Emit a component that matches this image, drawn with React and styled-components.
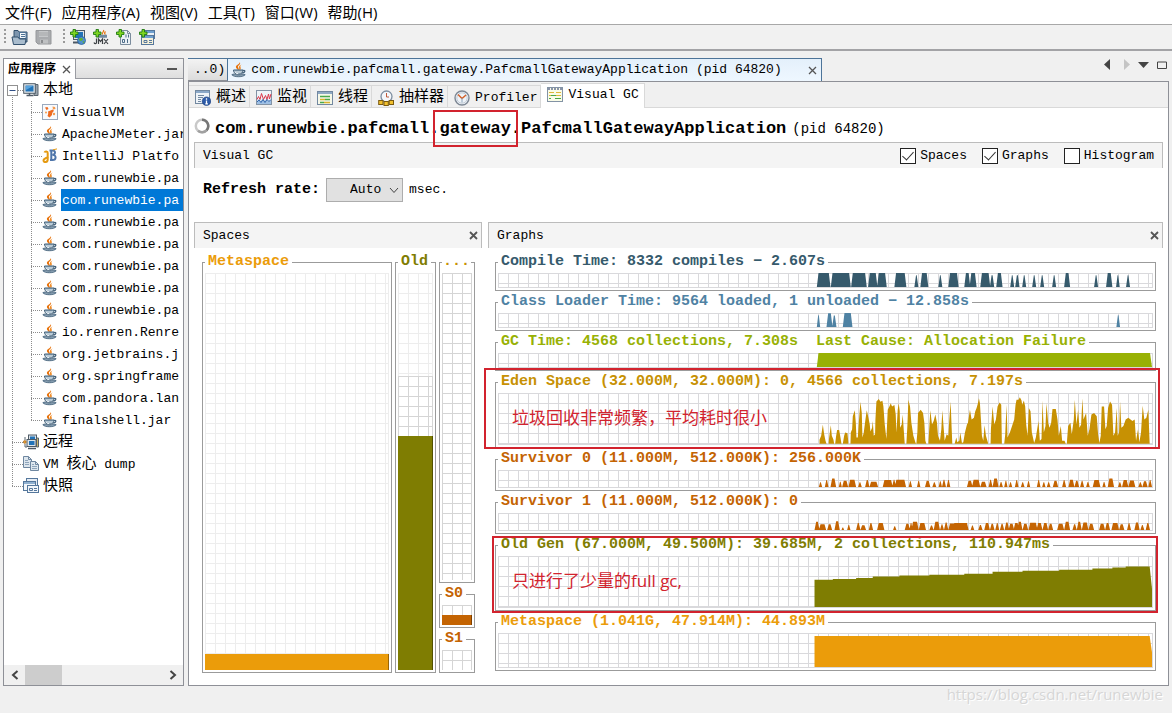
import React from "react";
import styled, { createGlobalStyle, css } from "styled-components";

const mono = `"Liberation Mono", "Noto Sans CJK SC", monospace`;
const sans = `"Open Sans", "Noto Sans CJK SC", sans-serif`;
const red = "#d2232e";

const Global = createGlobalStyle`
  * { box-sizing: border-box; }
  html, body { margin: 0; padding: 0; }
  body { background: #f0f0f0; color: #000; font: 13px/16px ${mono}; }
  button, input, select { font: inherit; color: inherit; margin: 0; }
  svg { display: block; flex: none; }
`;

/* ---------- window chrome ---------- */

const Window = styled.div`
  display: flex;
  flex-direction: column;
  min-height: 100vh;
`;

const MenuBar = styled.nav`
  display: flex;
  gap: 10px;
  height: 25px;
  padding: 0 5px;
  background: #fff;
  border-bottom: 1px solid #a8a8a8;
`;

const MenuItem = styled.button`
  padding: 0;
  border: 0;
  background: none;
  font: 15px/24px ${sans};
  white-space: nowrap;
`;

const Toolbar = styled.div`
  display: flex;
  align-items: center;
  gap: 7px;
  height: 26px;
  padding: 0 4px;
  background: #f1f1f1;
  border-bottom: 2px solid #a3a3a6;
`;

const Grip = styled.span`
  width: 2px;
  height: 16px;
  margin-left: ${(p) => (p.$spaced ? "4px" : "0")};
  margin-right: -2px;
  background: repeating-linear-gradient(#9a9a9a 0 2px, transparent 2px 4px);
`;

const IconButton = styled.button`
  display: flex;
  align-items: center;
  justify-content: center;
  padding: 0;
  border: 0;
  background: none;
`;

const Workspace = styled.div`
  display: flex;
  flex: 1;
  gap: 4px;
  padding: 7px 3px 0;
`;

const Footer = styled.footer`
  height: 27px;
  padding: 0 9px;
  text-align: right;
  font: 15px/16px ${sans};
  color: #d6d6d6;
  text-shadow: 1px 1px 0 #fff;
`;

/* ---------- application tree ---------- */

const Sidebar = styled.aside`
  display: flex;
  flex-direction: column;
  flex: none;
  width: 181px;
  background: #fff;
  border: 1px solid #8e9097;
`;

const SidebarHeader = styled.div`
  display: flex;
  justify-content: space-between;
  height: 20px;
  border-bottom: 1px solid #9a9ca2;
  background: linear-gradient(#f2f2f2, #dedede);
`;

const SidebarTab = styled.div`
  display: flex;
  align-items: center;
  gap: 6px;
  height: 20px;
  padding: 0 4px;
  background: #fff;
  border-right: 1px solid #9a9ca2;
  font: bold 12px/18px ${sans};
`;

const MinimizeButton = styled(IconButton)`
  width: 22px;
`;

const Tree = styled.ul`
  flex: 1;
  margin: 0;
  padding: 0;
  list-style: none;
  overflow: hidden;
`;

const TreeRow = styled.li`
  display: flex;
  align-items: center;
  height: 22px;
  white-space: nowrap;
`;

const dots = (dir) => `repeating-linear-gradient(${dir}, #8c8c8c 0 1px, transparent 1px 2px)`;

const Guide = styled.span`
  flex: none;
  display: flex;
  align-items: center;
  width: 19px;
  height: 22px;
  padding-left: 3px;
  background-repeat: no-repeat;
  background-image: ${dots("180deg")}, ${dots("90deg")};
  background-position: 8px ${(p) => (p.$line === "start" ? "16px" : "0")}, 8px 11px;
  background-size: 1px ${(p) => ({ full: "100%", end: "11px", start: "6px", none: "0" })[p.$line]},
    ${(p) => (p.$stub ? "11px" : "0")} 1px;
`;

const TreeLabel = styled.span`
  flex: 1;
  height: 22px;
  margin-left: 3px;
  padding-left: 1px;
  line-height: 24px;
  overflow: hidden;
  ${(p) =>
    p.$selected &&
    css`
      background: #0078d7;
      color: #fff;
    `}
`;

const Cjk = styled.span`
  font-size: 15px;
`;

const ScrollBar = styled.div`
  display: flex;
  align-items: stretch;
  height: 20px;
  background: #f0f0f0;
`;

const ScrollButton = styled(IconButton)`
  width: 21px;
`;

const ScrollThumb = styled.div`
  width: 37px;
  background: #cdcdcd;
`;

const ScrollTrack = styled.div`
  flex: 1;
`;

/* ---------- document area ---------- */

const Documents = styled.main`
  display: flex;
  flex-direction: column;
  flex: 1;
  min-width: 0;
`;

const TabStrip = styled.div`
  display: flex;
  height: 23px;
`;

const DocTab = styled.div`
  display: flex;
  align-items: center;
  gap: 4px;
  padding: 0 4px 0 3px;
  border: 0 solid #4d7499;
  border-width: 1px 1px 0 0;
  white-space: nowrap;
  ${(p) =>
    p.$active
      ? css`
          background: linear-gradient(#e4f0fb, #eef7ff);
        `
      : css`
          padding-left: 6px;
          padding-right: 2px;
          background: linear-gradient(#f3f3f3, #dcdcdc);
          border-bottom: 1px solid #8e9097;
        `}
`;

const DocTitle = styled.span`
  line-height: 24px;
  margin-right: 22px;
`;

const StripTools = styled.div`
  display: flex;
  flex: 1;
  align-items: center;
  justify-content: flex-end;
  gap: 8px;
  padding: 0 2px 10px 0;
`;

const Document = styled.section`
  display: flex;
  flex-direction: column;
  flex: 1;
  background: #fff;
  border: 1px solid #8e9097;
`;

const ViewTabs = styled.div`
  display: flex;
  align-items: flex-end;
  height: 26px;
  background: #f0f0f0;
  border-bottom: 1px solid #d9d9d9;
`;

const ViewTab = styled.button`
  display: flex;
  align-items: center;
  gap: 5px;
  height: ${(p) => (p.$active ? "25px" : "22px")};
  margin-bottom: ${(p) => (p.$active ? "-1px" : "0")};
  padding: ${(p) => (p.$active ? "0 5px 2px 6px" : "2px 3px 0 6px")};
  border: 0 solid #d9d9d9;
  border-right-width: 1px;
  border-top-width: 1px;
  background: ${(p) => (p.$active ? "#fff" : "#f0f0f0")};
  white-space: nowrap;
`;

const Heading = styled.header`
  display: flex;
  align-items: center;
  height: 34px;
  padding: 2px 8px 0 5px;
  white-space: nowrap;
`;

const Title = styled.h1`
  margin: 6px 6px 0 5px;
  font: bold 17px/20px ${mono};
`;

const Pid = styled.span`
  margin-top: 6px;
  font-size: 14px;
`;

const Circled = styled.span`
  position: relative;
`;

const Marker = styled.span`
  position: absolute;
  inset: ${(p) => p.$inset};
  border: 2px solid ${red};
  pointer-events: none;
`;

const Note = styled.p`
  position: absolute;
  left: 16px;
  top: 16px;
  margin: 0;
  font: 17px/24px ${sans};
  color: ${red};
  white-space: nowrap;
`;

const Content = styled.div`
  display: flex;
  flex-direction: column;
  flex: 1;
  padding: 0 5px;
`;

const PanelBar = styled.div`
  display: flex;
  align-items: center;
  justify-content: space-between;
  height: 26px;
  padding: 0 8px;
  background: #f4f4f4;
  border: 1px solid #bcbcbc;
  border-bottom: 0;
`;

const PanelClose = styled(IconButton)`
  margin-right: -5px;
`;

const Options = styled.div`
  display: flex;
  gap: 15px;
`;

const Option = styled.label`
  display: flex;
  align-items: center;
  gap: 4px;
`;

const CheckBox = styled.input`
  appearance: none;
  display: flex;
  justify-content: center;
  width: 16px;
  height: 16px;
  background: #fff;
  border: 1px solid #222;
  &:checked::after {
    content: "";
    width: 5px;
    height: 10px;
    border: solid #333;
    border-width: 0 1px 1px 0;
    transform: rotate(42deg);
  }
`;

const RefreshRow = styled.div`
  display: flex;
  align-items: center;
  gap: 6px;
  padding: 10px 9px 20px;
`;

const RefreshLabel = styled.label`
  font-size: 15px;
  font-weight: bold;
`;

const SelectBox = styled.span`
  position: relative;
  svg {
    position: absolute;
    right: 4px;
    top: 9px;
    pointer-events: none;
  }
`;

const Select = styled.select`
  appearance: none;
  display: block;
  width: 77px;
  height: 24px;
  padding: 0 18px 0 23px;
  border: 1px solid #adadad;
  border-radius: 0;
  background: #e1e1e1;
`;

const Panels = styled.div`
  display: flex;
  flex: 1;
  gap: 6px;
`;

const Panel = styled.section`
  display: flex;
  flex-direction: column;
  flex: ${(p) => (p.$wide ? "1" : "0 0 288px")};
  min-width: 0;
`;

const SpacesBody = styled.div`
  display: flex;
  flex: 1;
  gap: 3px;
  padding: 6px 7px 12px 8px;
`;

const Column = styled.div`
  display: flex;
  flex-direction: column;
  flex: 0 0 ${(p) => p.$width};
  min-width: 0;
  gap: 3px;
`;

const GraphsBody = styled.div`
  display: flex;
  flex-direction: column;
  flex: 1;
  gap: 3px;
  padding: 6px 7px 14px;
`;

const Frame = styled.fieldset`
  position: relative;
  display: flex;
  flex: ${(p) => p.$flex || "1 1 auto"};
  min-width: 0;
  margin: 0;
  padding: 3px 2px 2px;
  border: 1px solid #9b9b9b;
`;

const Legend = styled.legend`
  padding: 0 ${(p) => (p.$tight ? "1px" : "3px")};
  font: bold 15px/16px ${mono};
  color: ${(p) => p.$color};
  white-space: pre;
`;

const gridLines = (c) => css`
  background-image: linear-gradient(90deg, ${c} 1px, transparent 1px), linear-gradient(${c} 1px, transparent 1px);
  background-size: 10px 10px;
`;

const Plot = styled.div`
  flex: 1;
  min-width: 0;
  height: ${(p) => p.$height}px;
  min-height: 100%;
  border: solid #d9d9dc;
  border-width: 0 1px 1px 0;
  ${gridLines("#d9d9dc")}
  svg {
    width: 100%;
    height: 100%;
  }
`;

const Gauge = styled.div`
  display: flex;
  flex-direction: column;
  flex: 1;
  min-height: 20px;
`;

const Cells = styled.div`
  border-right: 1px solid ${(p) => (p.$faint ? "#ededed" : "#d5d5d5")};
  ${(p) => gridLines(p.$faint ? "#ededed" : "#d5d5d5")}
`;

const Fill = styled.div`
  background: ${(p) => p.$color};
  border-right: 1px solid rgba(0, 0, 0, 0.35);
`;

/* ---------- icons ---------- */

const Svg = ({ s = 16, children }) => (
  <svg width={s} height={s} viewBox={`0 0 ${s} ${s}`} fill="none" aria-hidden="true">
    {children}
  </svg>
);

const JavaIcon = () => (
  <Svg>
    <path d="M8.800 0C10.200 2.600 7 3.400 6.900 4.700c0 1 1.500 1.800.6 3.700C6.400 7.300 4.600 6.300 4.900 4.600 5.200 2.900 8.700 2.300 8.800 0z" fill="#e8730c" />
    <path d="M10.800 2.600C8.900 3.700 9.300 4.600 9.700 5.500c.4 1-.1 2-1.100 2.900C8.700 7.200 7.600 6.300 7.900 5.100c.2-1.100 1.300-2 2.900-2.500z" fill="#f08a24" />
    <path d="M2.500 8h9.500c0 2.800-1.700 4.200-4.700 4.200S2.500 10.800 2.500 8z" fill="#b9cad6" stroke="#3f5d76" />
    <path d="M4 8.500h6.500" stroke="#6b879c" />
    <path d="M12 8.500c2.600-.8 2.600 2.200-.9 2.500" stroke="#3f5d76" strokeWidth="1.200" />
    <path d="M.8 12.700c1.800 2.700 11.500 2.700 13.400 0-1.200-.6-2.200-.7-3-.7-1.800 1.200-5.800 1.200-7.500 0-1 0-2 .1-2.900.7z" fill="#8ba2b4" stroke="#3f5d76" strokeWidth=".8" />
    <path d="M4 10c.5 1.200 1.500 1.600 3 1.600" stroke="#f2f6f9" />
  </Svg>
);

const VisualVmIcon = () => (
  <Svg>
    <rect x=".5" y=".5" width="15" height="15" fill="#f8fafd" stroke="#9aa9bd" />
    <path d="M6 7.500c2-.5 3-1.500 5-2l1 1.500c-1.500 1-2 2-2 4l-2.500 2.500-2-1.500c.5-1.500 1-2.500.5-4.500z" fill="#ee6b21" />
    <path d="M3 3.500l2.500-.5 1 2-2 1z" fill="#ee6b21" />
    <path d="M10.500 2.500l2.500.5.5 2-2.500.5z" fill="#f59a4c" />
    <circle cx="4" cy="8.500" r="1" fill="#f59a4c" />
    <circle cx="12" cy="10" r="1.200" fill="#f59a4c" />
  </Svg>
);

const JetBrainsIcon = () => (
  <Svg>
    <path d="M7.500 2.500h3.200c3.200 0 3 4-.2 4.300 4.200 0 4 5.200 0 5.200H8M9.300 2.500V12" stroke="#4f76aa" strokeWidth="2" />
    <path d="M2.500 4.500c.5-1.500 3.300-1.500 3.200.5v6.500c0 3-4 3.500-4.200 1 0-2 2.500-2.500 5-4" stroke="#e59a12" strokeWidth="2" />
    <path d="M11 1.800l4-.9" stroke="#e59a12" />
  </Svg>
);

const HostIcon = () => (
  <Svg>
    <path d="M11 2.500h4v11h-4z" fill="#9aa4ad" stroke="#59646e" />
    <rect x=".7" y="1.700" width="11.600" height="9.600" fill="#dfe4e8" stroke="#4e5a66" />
    <rect x="2.500" y="3.500" width="8" height="6" fill="#2173b8" />
    <path d="M3 4h7L3 8z" fill="#57a4df" />
    <path d="M3.500 13.500h7M6.500 11v2" stroke="#4e5a66" strokeWidth="1.500" />
  </Svg>
);

const RemoteIcon = () => (
  <Svg>
    <rect x="5.500" y="1" width="8" height="6" fill="#dfe4e8" stroke="#4e5a66" />
    <rect x="7" y="2.500" width="5" height="3" fill="#2173b8" />
    <path d="M13.500 4h2v9h-2z" fill="#c9b46a" stroke="#59646e" />
    <rect x="4" y="5.500" width="9" height="7" fill="#dfe4e8" stroke="#4e5a66" />
    <rect x="6" y="7" width="5.500" height="4" fill="#2173b8" />
    <path d="M5 14.500h8" stroke="#4e5a66" strokeWidth="1.500" />
    <circle cx="1.800" cy="8" r="1.400" fill="#eaa23a" stroke="#a0651a" strokeWidth=".7" />
    <path d="M2 3v3M2 10v3h2" stroke="#59646e" />
  </Svg>
);

const CoreDumpIcon = () => (
  <Svg>
    <path d="M.5.500h5l3 3v8h-8z" fill="#dde6ee" stroke="#6f87a0" />
    <path d="M5.500.5v3h3" stroke="#6f87a0" />
    <path d="M2 4.500h3M2 6.500h4M2 8.500h4" stroke="#8fa5bb" />
    <path d="M7.500 5.500h5l3 3v6h-8z" fill="#dde6ee" stroke="#6f87a0" />
    <path d="M12.500 5.500v3h3" stroke="#6f87a0" />
    <path d="M9 8.500h2M9 10.500h5M9 12.500h5" stroke="#8fa5bb" />
  </Svg>
);

const SnapshotIcon = () => (
  <Svg>
    <rect x="3.500" y=".5" width="11" height="8" fill="#e6edf4" stroke="#55779c" />
    <rect x=".5" y="3.500" width="12" height="9" fill="#f2f6fa" stroke="#55779c" />
    <path d="M1 5h11" stroke="#8fb0d0" strokeWidth="2" />
    <rect x="4.500" y="7.500" width="11" height="7" fill="#f2f6fa" stroke="#55779c" />
    <path d="M6.500 10.500h3v2h-3zM11 10.500h3M11 12.500h3" stroke="#55779c" />
  </Svg>
);

const Plus = () => (
  <path d="M3 .500h2.500v2.500H8v2.500H5.500V8H3V5.500H.5V3H3z" fill="#7ed321" stroke="#1f7a12" strokeWidth=".9" />
);

const OpenIcon = () => (
  <Svg s={17}>
    <path d="M3 1.500h4l1 1.500h8v10H3z" fill="#7d95ad" stroke="#33506d" />
    <rect x="8.500" y="3.500" width="6.500" height="6" fill="#f4f8fb" stroke="#4f7396" />
    <path d="M10 5.500h4M10 7.500h4" stroke="#4f7396" />
    <path d="M1 8h6l1.500 2H15l-1 5.500H2.500z" fill="#a9bccd" stroke="#33506d" />
  </Svg>
);

const SaveIcon = () => (
  <Svg s={17}>
    <path d="M1 1.500h15v13.500H3L1 13z" fill="#a9abae" stroke="#96989b" />
    <path d="M4 2h9v6H4z" fill="#c6c8ca" />
    <path d="M4 4h9M4 6h9" stroke="#a4a6a8" />
    <path d="M5 10.500h8v4H5z" fill="#bfc1c3" />
    <path d="M7 11v3" stroke="#8b8d90" strokeWidth="2" />
  </Svg>
);

const AddHostIcon = () => (
  <Svg>
    <rect x="3.500" y="1.500" width="11" height="9" fill="#dfe4e8" stroke="#4e5a66" />
    <rect x="5" y="3" width="8" height="6" fill="#2173b8" />
    <path d="M3 13.500h8" stroke="#4e5a66" strokeWidth="2" />
    <circle cx="11.500" cy="11.500" r="4" fill="#4e8fd0" stroke="#2a5f94" strokeWidth=".8" />
    <path d="M9 9.500l3-.8 1 2-2 1.300-2-.7zM12.500 12.500l2-.5-1.200 2.500z" fill="#61b22c" />
    <Plus />
  </Svg>
);

const AddJmxIcon = () => (
  <Svg>
    <path d="M10.500 1c1 1.500-2 2.500-1 4.500M12.500 2.500c-1 1-1.500 2 0 3" stroke="#e87511" strokeWidth="1.200" />
    <path d="M6 6.500h8M5 8h9" stroke="#7189a0" strokeWidth="1.300" />
    <path d="M3.500 9.500v4c0 1.500-2 1.500-2.500 0M5.500 15V10l2 2.500 2-2.500v5M11 10l4 5M15 10l-4 5" stroke="#3d4145" strokeWidth="1.200" />
    <Plus />
  </Svg>
);

const AddDumpIcon = () => (
  <Svg>
    <path d="M4.500 1.500h7l3 3v11h-10z" fill="#eaf0f5" stroke="#7b8c9d" />
    <path d="M11.500 1.500v3h3" stroke="#7b8c9d" />
    <path d="M10 5.500v3M12.500 5.500v3M6.500 10.500h2v3h-2zM11.500 10v4" stroke="#4e6c8a" />
    <Plus />
  </Svg>
);

const AddSnapshotIcon = () => (
  <Svg>
    <rect x="5.500" y="1.500" width="10" height="8" fill="#eaf0f5" stroke="#55779c" />
    <path d="M6 3h9" stroke="#6fa0d0" strokeWidth="2" />
    <rect x="2.500" y="6.500" width="12" height="9" fill="#f6f0d8" stroke="#55779c" />
    <path d="M3 8h11" stroke="#6fa0d0" strokeWidth="2" />
    <path d="M5 11.500h3v2H5zM10 11.500h3M10 13.500h3" stroke="#55779c" />
    <Plus />
  </Svg>
);

const OverviewIcon = () => (
  <Svg>
    <rect x=".5" y=".5" width="14" height="13" fill="#eef3f8" stroke="#7288a0" />
    <path d="M1 2h13" stroke="#8ba8c8" strokeWidth="2" />
    <path d="M3 5.500h6M3 7.500h5M3 9.500h3M3 11.500h3" stroke="#7288a0" />
    <circle cx="11.500" cy="11.200" r="4.300" fill="#2c5aa8" stroke="#1d3f7c" strokeWidth=".6" />
    <path d="M11.500 8.300v1.500M11.500 10.500v3.500M10.300 13.900h2.600" stroke="#fff" strokeWidth="1.300" />
  </Svg>
);

const MonitorIcon = () => (
  <Svg>
    <rect x=".5" y=".5" width="15" height="14" fill="#eef3f8" stroke="#8393a5" />
    <path d="M1 14v-3l2-2 1.500 2L7 9l2 2 1.500-2 2 2L15 9.500V14z" fill="#9fc0e4" />
    <path d="M1 9.500l1.500-3 1.500 3 1.500-6 2 6 2-4 1.500 4L12.500 4l1 5L15 4" stroke="#dc3a4c" />
    <path d="M1 12l2-2 2 2.500 2-3 2 3 2-3 2 2 2-2" stroke="#3568ae" />
  </Svg>
);

const ThreadsIcon = () => (
  <Svg>
    <rect x=".5" y="1.500" width="15" height="13" fill="#f6f8e8" stroke="#7288a0" />
    <path d="M1 3h14" stroke="#8fa9c4" strokeWidth="2" />
    <path d="M3 6.500h10" stroke="#4aa84a" strokeWidth="1.500" />
    <path d="M3 9.500h5" stroke="#d8b22e" strokeWidth="1.500" />
    <path d="M8 9.500h5M3 12.500h4" stroke="#4aa84a" strokeWidth="1.500" />
    <path d="M7 12.500h6" stroke="#d8b22e" strokeWidth="1.500" />
  </Svg>
);

const SamplerIcon = () => (
  <Svg>
    <circle cx="8.500" cy="6.500" r="5.500" fill="#f4f7fa" stroke="#7d8ea0" strokeWidth="1.300" />
    <path d="M8.500 3v4h2.500" stroke="#c05a3a" />
    <rect x=".7" y="10.500" width="4.300" height="4" fill="#f1c02e" stroke="#7a5a10" />
    <rect x="6" y="11.500" width="4.300" height="4" fill="#f1c02e" stroke="#7a5a10" />
    <rect x="11.200" y="10.500" width="4.300" height="4" fill="#f1c02e" stroke="#7a5a10" />
  </Svg>
);

const ProfilerIcon = () => (
  <Svg>
    <circle cx="8" cy="8" r="7" fill="#eef3f8" stroke="#7d8794" strokeWidth="1.400" />
    <circle cx="8" cy="8" r="5.200" stroke="#c3ccd6" />
    <path d="M4 4.500L8 8.500 12 5" stroke="#d4622a" strokeWidth="1.500" />
    <path d="M8 8v4.500" stroke="#8fa5bb" />
  </Svg>
);

const VisualGcIcon = () => (
  <Svg>
    <rect x=".5" y=".5" width="15" height="14" fill="#fafce8" stroke="#8393a5" />
    <path d="M1 2h14" stroke="#8a94a8" strokeWidth="2" strokeDasharray="2 1" />
    <path d="M2 5.500h5M9 5.500h5M2 8.500h2M9 8.500h5" stroke="#dfb83a" strokeWidth="1.200" />
    <path d="M4 8.500h5M2 11.500h2M8 11.500h6" stroke="#4aa84a" strokeWidth="1.200" />
  </Svg>
);

const CloseIcon = ({ bold }) => (
  <Svg s={9}>
    <path d="M1 1l7 7M8 1L1 8" stroke="#555" strokeWidth={bold ? 1.800 : 1.300} />
  </Svg>
);

const SpinnerIcon = () => (
  <Svg>
    <circle cx="8" cy="8" r="6.200" stroke="#c9c9c9" strokeWidth="2.500" />
    <path d="M8 1.800a6.200 6.200 0 0 1 4.500 10.500" stroke="#777" strokeWidth="2.500" />
    <path d="M12.500 12.300A6.200 6.200 0 0 1 4 12.700" stroke="#a0a0a0" strokeWidth="2.500" />
  </Svg>
);

const Shape = ({ w, h, d, fill = "none", stroke = "none", sw = 1 }) => (
  <svg width={w} height={h} viewBox={`0 0 ${w} ${h}`} fill={fill} stroke={stroke} strokeWidth={sw} aria-hidden="true">
    <path d={d} />
  </svg>
);

/* ---------- data ---------- */

const apps = [
  [VisualVmIcon, "VisualVM"],
  [JavaIcon, "ApacheJMeter.jar"],
  [JetBrainsIcon, "IntelliJ Platfo"],
  [JavaIcon, "com.runewbie.pa"],
  [JavaIcon, "com.runewbie.pa", true],
  [JavaIcon, "com.runewbie.pa"],
  [JavaIcon, "com.runewbie.pa"],
  [JavaIcon, "com.runewbie.pa"],
  [JavaIcon, "com.runewbie.pa"],
  [JavaIcon, "com.runewbie.pa"],
  [JavaIcon, "io.renren.Renre"],
  [JavaIcon, "org.jetbrains.j"],
  [JavaIcon, "org.springframe"],
  [JavaIcon, "com.pandora.lan"],
  [JavaIcon, "finalshell.jar"],
];

// Plots run from x = -846 to 1119 in thirds of a pixel; samples start near x = 105.
const spikes = (base, list) =>
  list
    .map(([a, b, h]) => {
      const slope = Math.min((b - a) / 2 - 1, 5);
      return `M${a} ${base}L${a + slope} ${base - h}H${b - slope}L${b} ${base}z`;
    })
    .join("");

const tall = (list) => list.map(([a, b]) => [a, b, b - a < 14 ? 38 : 45]);

const compilePath = spikes(45, tall([
  [112, 153], [154, 214], [215, 262], [266, 294], [293, 322], [345, 381], [405, 417], [423, 447], [477, 489],
  [507, 538], [555, 573], [571, 592], [603, 633], [632, 645], [651, 670], [693, 705], [708, 721], [729, 741],
  [759, 771], [783, 795], [819, 831], [855, 873], [945, 957], [981, 1000], [1011, 1022], [1041, 1053],
]));

const classPath = spikes(45, [[112, 122, 38], [141, 159, 44], [158, 171, 37], [190, 219, 45], [1012, 1023, 38]]);

const edenPath =
  "M120 224V212L125 200 130 166 134 195 138 215 141 224zM147 224L149 205 154 168 157 200 162 212 164 224z" +
  "M167 224L170 200 173 182H179L183 205 186 224zM190 224L194 200 197 190 204 192 207 224z" +
  "M213 224L214 190 218 180 220 140 226 122 229 160 231 205 235 205 238 160 243 96 247 130 249 205 253 190 258 150 262 122 267 145 271 165 273 187 278 175 280 155 283 200 287 195 288 150 291 95 298 87 301 92 303 96 309 93 312 110 316 165 321 210 325 120 330 110 334 100 338 110 345 106 349 135 351 190 355 120 358 100 361 125 362 175 367 165 370 135 373 180 376 224z" +
  "M381 224L384 170 387 90 392 110 396 160 402 200 408 220 410 224zM411 224L414 190 416 130 424 120 431 130 435 160 438 215 441 224z" +
  "M447 224L449 190 453 122 458 165 463 155 468 135 473 160 476 200 482 215 486 180 489 122 493 175 496 215 502 195 507 200 510 150 514 95 517 175 519 224z" +
  "M526 224L531 205 534 220 540 215 543 190 548 222 552 220 557 190 563 165 566 160 572 120 577 150 584 145 588 125 592 115 596 100 599 85 602 100 605 150 608 200 612 215 616 168 620 200 627 224z" +
  "M634 224L635 180 640 110 645 165 650 150 655 110 661 98 666 105 668 224z" +
  "M675 224L678 195 682 105 685 205 692 190 700 165 705 150 709 105 712 90 718 90 722 82 727 92 729 105 734 92 738 110 741 165 745 200 749 115 754 125 758 190 765 222 770 205 778 155 782 215 787 210 790 92 794 190 799 170 802 100 807 160 811 175 816 160 820 118 830 118 835 150 839 200 845 170 849 215 856 215 860 224z" +
  "M863 224L867 170 874 160 878 195 884 150 887 90 892 165 897 120 901 175 906 165 910 85 913 150 921 130 926 200 931 180 937 135 945 130 953 140 957 195 961 222 965 200 968 110 975 110 979 180 983 170 987 115 993 95 999 105 1003 200 1008 190 1013 115 1016 200 1020 190 1023 95 1027 175 1033 170 1040 150 1048 145 1060 155 1067 150 1071 215 1077 180 1081 220 1086 190 1091 108 1096 150 1102 145 1108 120 1112 224z";

const survivor0Path = spikes(54, [
  [118, 128, 15], [136, 147, 22], [153, 170, 27], [178, 187, 17], [188, 206, 20], [207, 230, 23], [236, 247, 15],
  [257, 270, 22], [270, 296, 17], [310, 340, 22], [338, 350, 23], [346, 380, 23], [388, 398, 18], [413, 423, 20],
  [437, 453, 20], [459, 471, 15], [478, 488, 18], [488, 500, 23], [502, 513, 22], [563, 580, 20], [578, 603, 23],
  [603, 622, 17], [628, 640, 23], [640, 658, 27], [660, 671, 16], [675, 685, 20], [689, 699, 15], [707, 718, 22],
  [725, 736, 15], [743, 753, 18], [773, 784, 22], [789, 799, 15], [803, 814, 15], [821, 837, 20], [849, 861, 22],
  [868, 886, 23], [886, 900, 20], [903, 915, 20], [921, 932, 16], [941, 964, 22], [970, 980, 16], [986, 1005, 27],
  [1017, 1028, 15], [1029, 1048, 22], [1048, 1069, 21], [1078, 1090, 15], [1090, 1106, 18], [1108, 1119, 22],
]);

const survivor1Path = spikes(54, [
  [105, 120, 26], [118, 140, 18], [143, 158, 18], [165, 181, 28], [186, 194, 8], [203, 213, 16], [230, 243, 22],
  [243, 260, 15], [268, 281, 22], [293, 315, 22], [341, 351, 12], [376, 392, 20], [390, 400, 22], [396, 418, 26],
  [418, 440, 22], [450, 463, 14], [463, 482, 26], [482, 494, 18], [494, 507, 24], [507, 530, 21], [520, 568, 22],
  [574, 585, 14], [597, 610, 16], [615, 632, 22], [632, 646, 20], [648, 660, 22], [662, 675, 20], [676, 690, 24],
  [688, 705, 20], [703, 720, 22], [714, 730, 26], [730, 747, 20], [748, 775, 23], [772, 790, 22], [790, 807, 22],
  [807, 822, 20], [834, 855, 20], [855, 873, 26], [880, 893, 18], [893, 908, 26], [908, 928, 24], [928, 945, 20],
  [960, 978, 20], [978, 993, 22], [997, 1020, 22], [1020, 1036, 18], [1044, 1056, 22], [1066, 1082, 24],
  [1084, 1096, 16], [1100, 1113, 22],
]);

const graphs = [
  { title: "Compile Time: 8332 compiles − 2.607s", color: "#365a6c", h: 15, d: compilePath },
  { title: "Class Loader Time: 9564 loaded, 1 unloaded − 12.858s", color: "#4f82a3", h: 15, d: classPath },
  {
    title: "GC Time: 4568 collections, 7.308s  Last Cause: Allocation Failure",
    color: "#98b104",
    h: 15,
    d: "M112 45L117 0H1113L1119 45z",
  },
  {
    title: "Eden Space (32.000M, 32.000M): 0, 4566 collections, 7.197s",
    color: "#c79103",
    h: 52,
    top: 69,
    d: edenPath,
    note: "垃圾回收非常频繁，平均耗时很小",
    marker: "-22px -5px -2px -12px",
  },
  { title: "Survivor 0 (11.000M, 512.000K): 256.000K", color: "#c46402", h: 18, d: survivor0Path },
  { title: "Survivor 1 (11.000M, 512.000K): 0", color: "#c46402", h: 18, d: survivor1Path },
  {
    title: "Old Gen (67.000M, 49.500M): 39.685M, 2 collections, 110.947ms",
    color: "#7f7d02",
    h: 52,
    d: "M105 156V73H160V70H230V67H280V63H360V60H450V57H555V54H640V48H730V45H840V42H940V38H1000V35H1040V32H1112L1119 100V156z",
    note: "只进行了少量的full gc,",
    marker: "-17px -3px -3px -4px",
  },
  { title: "Metaspace (1.041G, 47.914M): 44.893M", color: "#eb9c0a", h: 35, d: "M105 105V9H1112L1119 60V105z" },
];

/* ---------- parts ---------- */

const Graph = ({ title, color, h, top = 0, d, note, marker }) => (
  <Frame $flex={`${h > 30 ? h : 0} 0 auto`}>
    <Legend $color={color}>{title}</Legend>
    <Plot $height={h}>
      <svg viewBox={`-846 ${top} 1965 ${h * 3}`} preserveAspectRatio="none" aria-hidden="true">
        <path d={d} fill={color} />
      </svg>
    </Plot>
    {note && <Note>{note}</Note>}
    {marker && <Marker $inset={marker} />}
  </Frame>
);

const Space = ({ title, color, faint = 0, used = 0, fixed, tight }) => (
  <Frame $flex={fixed ? "0 0 auto" : "1 1 auto"}>
    <Legend $color={color} $tight={tight}>{title}</Legend>
    <Gauge>
      {faint > 0 && <Cells $faint style={{ flex: faint }} />}
      {faint + used < 100 && <Cells style={{ flex: 100 - faint - used }} />}
      {used > 0 && <Fill $color={color} style={{ flex: used }} />}
    </Gauge>
  </Frame>
);

const views = [
  [OverviewIcon, "概述"],
  [MonitorIcon, "监视"],
  [ThreadsIcon, "线程"],
  [SamplerIcon, "抽样器"],
];

export default function App() {
  return (
    <Window>
      <Global />
      <MenuBar>
        {["文件(F)", "应用程序(A)", "视图(V)", "工具(T)", "窗口(W)", "帮助(H)"].map((m) => (
          <MenuItem key={m}>{m}</MenuItem>
        ))}
      </MenuBar>
      <Toolbar>
        <Grip />
        <IconButton aria-label="Open"><OpenIcon /></IconButton>
        <IconButton aria-label="Save"><SaveIcon /></IconButton>
        <Grip $spaced />
        <IconButton aria-label="Add host"><AddHostIcon /></IconButton>
        <IconButton aria-label="Add JMX connection"><AddJmxIcon /></IconButton>
        <IconButton aria-label="Add core dump"><AddDumpIcon /></IconButton>
        <IconButton aria-label="Add snapshot"><AddSnapshotIcon /></IconButton>
      </Toolbar>

      <Workspace>
        <Sidebar>
          <SidebarHeader>
            <SidebarTab>
              应用程序
              <IconButton aria-label="Close"><CloseIcon /></IconButton>
            </SidebarTab>
            <MinimizeButton aria-label="Minimize">
              <Shape w={10} h={2} d="M0 1H10" stroke="#555" sw={2} />
            </MinimizeButton>
          </SidebarHeader>
          <Tree>
            <TreeRow>
              <Guide $line="start" $stub>
                <svg width="11" height="11" viewBox="0 0 11 11" aria-hidden="true">
                  <rect x=".5" y=".5" width="10" height="10" fill="#fff" stroke="#919191" />
                  <path d="M2.500 5.500h6" stroke="#2f4f86" />
                </svg>
              </Guide>
              <HostIcon />
              <TreeLabel><Cjk>本地</Cjk></TreeLabel>
            </TreeRow>
            {apps.map(([Icon, name, selected], i) => (
              <TreeRow key={i}>
                <Guide $line="full" />
                <Guide $line={i === apps.length - 1 ? "end" : "full"} $stub />
                <Icon />
                <TreeLabel $selected={selected}>{name}</TreeLabel>
              </TreeRow>
            ))}
            <TreeRow>
              <Guide $line="full" $stub />
              <RemoteIcon />
              <TreeLabel><Cjk>远程</Cjk></TreeLabel>
            </TreeRow>
            <TreeRow>
              <Guide $line="full" $stub />
              <CoreDumpIcon />
              <TreeLabel>VM <Cjk>核心</Cjk> dump</TreeLabel>
            </TreeRow>
            <TreeRow>
              <Guide $line="end" $stub />
              <SnapshotIcon />
              <TreeLabel><Cjk>快照</Cjk></TreeLabel>
            </TreeRow>
          </Tree>
          <ScrollBar>
            <ScrollButton aria-label="Scroll left">
              <Shape w={8} h={10} d="M6.500 1L2 5L6.500 9" stroke="#444" sw={2} />
            </ScrollButton>
            <ScrollThumb />
            <ScrollTrack />
            <ScrollButton aria-label="Scroll right">
              <Shape w={8} h={10} d="M1.500 1L6 5L1.500 9" stroke="#444" sw={2} />
            </ScrollButton>
          </ScrollBar>
        </Sidebar>

        <Documents>
          <TabStrip>
            <DocTab>..0)</DocTab>
            <DocTab $active>
              <JavaIcon />
              <DocTitle>com.runewbie.pafcmall.gateway.PafcmallGatewayApplication (pid 64820)</DocTitle>
              <IconButton aria-label="Close tab"><CloseIcon /></IconButton>
            </DocTab>
            <StripTools>
              <IconButton aria-label="Previous"><Shape w={9} h={11} d="M6 0V11L0 5.500z" fill="#444" /></IconButton>
              <IconButton aria-label="Next"><Shape w={9} h={11} d="M3 0V11L9 5.500z" fill="#c4c4c4" /></IconButton>
              <IconButton aria-label="List"><Shape w={11} h={6} d="M0 0H11L5.500 6z" fill="#444" /></IconButton>
              <IconButton aria-label="Maximize">
                <Shape w={10} h={8} d="M.5 1H9.500V7.500H.5z" stroke="#444" />
              </IconButton>
            </StripTools>
          </TabStrip>

          <Document>
            <ViewTabs>
              {views.map(([Icon, name]) => (
                <ViewTab key={name}>
                  <Icon />
                  <Cjk>{name}</Cjk>
                </ViewTab>
              ))}
              <ViewTab>
                <ProfilerIcon />
                Profiler
              </ViewTab>
              <ViewTab $active>
                <VisualGcIcon />
                Visual GC
              </ViewTab>
            </ViewTabs>

            <Heading>
              <SpinnerIcon />
              <Title>
                com.runewbie.pafcmall.<Circled>gateway.<Marker $inset="-9px 3px -9px -6px" /></Circled>PafcmallGatewayApplication
              </Title>
              <Pid>(pid 64820)</Pid>
            </Heading>

            <Content>
              <PanelBar>
                Visual GC
                <Options>
                  <Option><CheckBox type="checkbox" defaultChecked />Spaces</Option>
                  <Option><CheckBox type="checkbox" defaultChecked />Graphs</Option>
                  <Option><CheckBox type="checkbox" />Histogram</Option>
                </Options>
              </PanelBar>

              <RefreshRow>
                <RefreshLabel htmlFor="rate">Refresh rate:</RefreshLabel>
                <SelectBox>
                  <Select id="rate" defaultValue="Auto">
                    <option>Auto</option>
                  </Select>
                  <Shape w={10} h={7} d="M1 1L5 5.500L9 1" stroke="#444" />
                </SelectBox>
                msec.
              </RefreshRow>

              <Panels>
                <Panel>
                  <PanelBar>
                    Spaces
                    <PanelClose aria-label="Close Spaces"><CloseIcon bold /></PanelClose>
                  </PanelBar>
                  <SpacesBody>
                    <Space title="Metaspace" color="#eb9c0a" faint={96} used={4} />
                    <Column $width="41px">
                      <Space title="Old" color="#7f7d02" faint={26} used={59} />
                    </Column>
                    <Column $width="36px">
                      <Space title="..." color="#c79103" tight />
                      <Space title="S0" color="#c46402" used={50} fixed />
                      <Space title="S1" color="#c46402" fixed />
                    </Column>
                  </SpacesBody>
                </Panel>

                <Panel $wide>
                  <PanelBar>
                    Graphs
                    <PanelClose aria-label="Close Graphs"><CloseIcon bold /></PanelClose>
                  </PanelBar>
                  <GraphsBody>
                    {graphs.map((g) => (
                      <Graph key={g.title} {...g} />
                    ))}
                  </GraphsBody>
                </Panel>
              </Panels>
            </Content>
          </Document>
        </Documents>
      </Workspace>
      <Footer>https://blog.csdn.net/runewbie</Footer>
    </Window>
  );
}
